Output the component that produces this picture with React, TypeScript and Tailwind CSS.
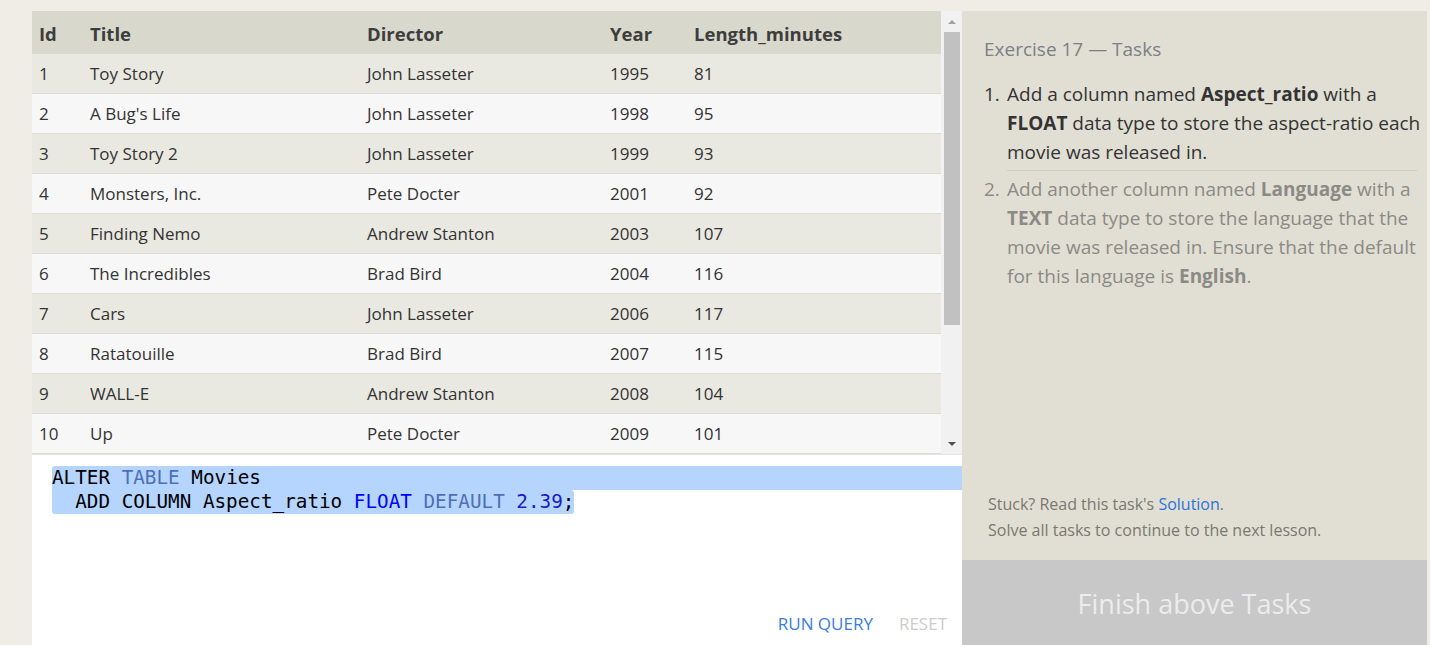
import React from "react";

type Movie = {
  id: number;
  title: string;
  director: string;
  year: number;
  length: number;
};

const movies: Movie[] = [
  { id: 1, title: "Toy Story", director: "John Lasseter", year: 1995, length: 81 },
  { id: 2, title: "A Bug's Life", director: "John Lasseter", year: 1998, length: 95 },
  { id: 3, title: "Toy Story 2", director: "John Lasseter", year: 1999, length: 93 },
  { id: 4, title: "Monsters, Inc.", director: "Pete Docter", year: 2001, length: 92 },
  { id: 5, title: "Finding Nemo", director: "Andrew Stanton", year: 2003, length: 107 },
  { id: 6, title: "The Incredibles", director: "Brad Bird", year: 2004, length: 116 },
  { id: 7, title: "Cars", director: "John Lasseter", year: 2006, length: 117 },
  { id: 8, title: "Ratatouille", director: "Brad Bird", year: 2007, length: 115 },
  { id: 9, title: "WALL-E", director: "Andrew Stanton", year: 2008, length: 104 },
  { id: 10, title: "Up", director: "Pete Docter", year: 2009, length: 101 },
];

const MovieTable: React.FC = () => {
  return (
    <div className="flex h-[443px] bg-[#f7f7f7]">
      <div className="w-[909px] overflow-hidden">
        <div className="flex h-[43px] items-center bg-[#d9d8cc] pt-[3px] text-[18.5px] font-bold text-[#3d3d3d]">
          <div className="w-[58px] pl-[7px]">Id</div>
          <div className="w-[277px]">Title</div>
          <div className="w-[243px]">Director</div>
          <div className="w-[84px]">Year</div>
          <div>Length_minutes</div>
        </div>
        {movies.map((m, i) => (
          <div
            key={m.id}
            className={
              "flex h-[40px] items-center border-b border-[#dddcd3] text-[17px] text-[#333] " +
              (i % 2 === 0 ? "bg-[#e9e8e1]" : "bg-[#f7f7f7]")
            }
          >
            <div className="w-[58px] pl-[7px]">{m.id}</div>
            <div className="w-[277px]">{m.title}</div>
            <div className="w-[243px]">{m.director}</div>
            <div className="w-[84px]">{m.year}</div>
            <div>{m.length}</div>
          </div>
        ))}
      </div>
      {/* scrollbar */}
      <div className="flex w-[21px] flex-col items-center bg-[#f1f1f1]">
        <div className="flex h-[21px] items-center justify-center">
          <div className="h-0 w-0 border-x-[4px] border-b-[4px] border-x-transparent border-b-[#a3a3a3]" />
        </div>
        <div className="h-[293px] w-[16px] bg-[#c1c1c1]" />
        <div className="flex-1" />
        <div className="flex h-[21px] items-center justify-center">
          <div className="h-0 w-0 border-x-[4px] border-t-[4px] border-x-transparent border-t-[#505050]" />
        </div>
      </div>
    </div>
  );
};

const Editor: React.FC = () => {
  return (
    <div className="flex flex-1 flex-col border-t border-[#e6e5de] bg-white">
      <div className="pt-[11px] pl-[20px] font-['DejaVu_Sans_Mono',monospace] text-[19.3px] leading-[24px] text-black">
        <div className="whitespace-pre rounded-tl-[3px] bg-[#b5d5ff]">
          ALTER <span className="text-[#4e6fb8]">TABLE</span> Movies
        </div>
        <div className="inline-block whitespace-pre rounded-b-[3px] rounded-tr-[3px] bg-[#b5d5ff]">
          {"  ADD COLUMN Aspect_ratio "}
          <span className="text-[#0000ff]">FLOAT</span>{" "}
          <span className="text-[#4e6fb8]">DEFAULT</span>{" "}
          <span className="text-[#1a1ac8]">2.39</span>;
        </div>
      </div>
      <div className="flex-1" />
      <div className="flex justify-end gap-[26px] pr-[15px] pb-[9px] text-[17px]">
        <span className="text-[#3b7ddd]">RUN QUERY</span>
        <span className="text-[#cccccc]">RESET</span>
      </div>
    </div>
  );
};

const TaskPanel: React.FC = () => {
  return (
    <div className="flex w-[465px] flex-col bg-[#e1dfd4]">
      <div className="flex flex-1 flex-col pt-[24px] pr-[3px] pl-[22px]">
        <div className="text-[19px] text-[#7c7f85]">Exercise 17 — Tasks</div>
        <ol className="mt-[16px] text-[19px] leading-[29px]">
          <li className="flex text-[#333]">
            <span className="w-[23px] shrink-0">1.</span>
            <div className="mr-[7px] flex-1 border-b border-[#cfcdc2] pb-[3px]">
              <span className="-mr-[7px] block">
                Add a column named <b>Aspect_ratio</b> with a <b>FLOAT</b> data type to store the
                aspect-ratio each movie was released in.
              </span>
            </div>
          </li>
          <li className="mr-[5px] flex pt-[4px] text-[#8c8a85]">
            <span className="w-[23px] shrink-0">2.</span>
            <span>
              Add another column named <b>Language</b> with a <b>TEXT</b> data type to store the
              language that the movie was released in. Ensure that the default for this language
              is <b>English</b>.
            </span>
          </li>
        </ol>
        <div className="flex-1" />
        <div className="pb-[17px] pl-[4px] text-[16px] leading-[26px] text-[#7a7870]">
          <div>
            Stuck? Read this task's <span className="text-[#2a73d8]">Solution</span>.
          </div>
          <div>Solve all tasks to continue to the next lesson.</div>
        </div>
      </div>
      <div className="flex h-[85px] items-center justify-center bg-[#c8c8c8] pt-[4px] text-[27px] text-[#ececec]">
        Finish above Tasks
      </div>
    </div>
  );
};

export default function App() {
  return (
    <div className="flex h-[645px] w-[1430px] overflow-hidden bg-[#efede6] pt-[11px] pl-[32px] font-['Open_Sans',sans-serif]">
      <div className="flex w-[930px] flex-col">
        <MovieTable />
        <Editor />
      </div>
      <TaskPanel />
    </div>
  );
}
